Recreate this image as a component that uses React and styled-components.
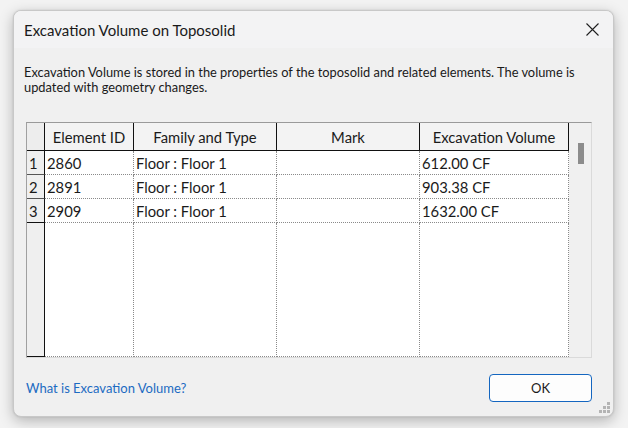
import React from 'react';
import styled, { createGlobalStyle } from 'styled-components';

const Global = createGlobalStyle`
  html, body {
    margin: 0;
    padding: 0;
    background: #f3f3f3;
  }
  body {
    width: 628px;
    height: 428px;
    overflow: hidden;
    font-family: "Segoe UI", Lato, "Noto Sans", sans-serif;
    color: #1a1a1a;
  }
`;

const Desktop = styled.div`
  width: 628px;
  height: 428px;
  box-sizing: border-box;
  padding: 10px 14px 0 13px;
`;

const Window = styled.div`
  position: relative;
  width: 601px;
  height: 407px;
  box-sizing: border-box;
  display: flex;
  flex-direction: column;
  background: #f0f0f0;
  border: 1px solid #c8c8c8;
  border-radius: 8px;
  overflow: hidden;
  box-shadow: 0 4px 14px rgba(0, 0, 0, 0.26), 0 0 2px rgba(0, 0, 0, 0.12);
`;

const TitleBar = styled.div`
  height: 37px;
  display: flex;
  align-items: center;
  padding-left: 10px;
  background: #f3f3f4;
`;

const Title = styled.div`
  font-size: 15px;
  color: #1a1a1a;
`;

const CloseButton = styled.div`
  margin-left: auto;
  width: 42px;
  height: 37px;
  display: flex;
  align-items: center;
  justify-content: center;
`;

const Content = styled.div`
  display: flex;
  flex-direction: column;
  padding: 0 22px 0 12px;
`;

const Description = styled.p`
  margin: 17px 0 0 -2px;
  font-size: 12.85px;
  line-height: 15px;
  color: #1a1a1a;
`;

const GridBox = styled.div`
  margin-top: 27px;
  width: 566px;
  box-sizing: border-box;
  display: flex;
  border-top: 1px solid #9a9a9a;
  border-left: 1px solid #a0a0a0;
  border-right: 1px solid #dadada;
  border-bottom: 1px solid #dadada;
  background: #ffffff;
`;

const Sheet = styled.div`
  display: grid;
  grid-template-columns: 18px 89px 143px 143px 149px;
  grid-template-rows: 28px 24px 24px 24px 134px;
  font-size: 14.8px;
`;

const Corner = styled.div`
  background: #ededed;
  border-right: 1px solid #111;
  border-bottom: 1px solid #111;
`;

const HeaderCell = styled.div`
  background: #f3f3f3;
  border-right: 1px solid #111;
  border-bottom: 1px solid #111;
  display: flex;
  align-items: center;
  justify-content: center;
  font-size: 14.8px;
  color: #1a1a1a;
  white-space: nowrap;
`;

const RowHeader = styled.div`
  background: #efefef;
  border-right: 1px solid #111;
  border-bottom: 1px solid ${p => (p.$last ? '#111' : '#555')};
  display: flex;
  align-items: center;
  padding-left: 2px;
  font-size: 14.8px;
`;

const Cell = styled.div`
  background: #ffffff;
  border-right: 1px dotted #8a8a8a;
  border-bottom: 1px dotted #8a8a8a;
  display: flex;
  align-items: center;
  padding-left: 2px;
  font-size: 14.8px;
  color: #1a1a1a;
  white-space: nowrap;
`;

const ScrollTrack = styled.div`
  width: 22px;
  background: #f0f0f0;
  display: flex;
  justify-content: center;
`;

const Thumb = styled.div`
  margin-top: 20px;
  margin-left: 2px;
  width: 6px;
  height: 21px;
  background: #8c8c8c;
`;

const Footer = styled.div`
  margin-top: 16px;
  display: flex;
  align-items: center;
  justify-content: space-between;
`;

const HelpLink = styled.a`
  font-size: 13px;
  color: #1c6bc2;
  text-decoration: none;
  cursor: pointer;
`;

const OkButton = styled.button`
  width: 103px;
  height: 28px;
  margin-right: -1px;
  box-sizing: border-box;
  border: 1px solid #1466c0;
  border-radius: 4px;
  background: #fdfdfd;
  font-family: inherit;
  font-size: 13px;
  color: #1a1a1a;
  padding: 0;
`;

const Grip = styled.svg`
  position: absolute;
  right: 2px;
  bottom: 2px;
`;

const rows = [
  { n: 1, id: '2860', type: 'Floor : Floor 1', mark: '', vol: '612.00 CF' },
  { n: 2, id: '2891', type: 'Floor : Floor 1', mark: '', vol: '903.38 CF' },
  { n: 3, id: '2909', type: 'Floor : Floor 1', mark: '', vol: '1632.00 CF' },
];

export default function App() {
  return (
    <>
      <Global />
      <Desktop>
        <Window>
          <TitleBar>
            <Title>Excavation Volume on Toposolid</Title>
            <CloseButton>
              <svg width="13" height="13" viewBox="0 0 13 13">
                <path d="M0.5 0.5 L12.5 12.5 M12.5 0.5 L0.5 12.5" stroke="#1f1f1f" strokeWidth="1.1" fill="none" />
              </svg>
            </CloseButton>
          </TitleBar>
          <Content>
            <Description>
              Excavation Volume is stored in the properties of the toposolid and related elements. The volume is
              updated with geometry changes.
            </Description>
            <GridBox>
              <Sheet>
                <Corner />
                <HeaderCell>Element ID</HeaderCell>
                <HeaderCell>Family and Type</HeaderCell>
                <HeaderCell>Mark</HeaderCell>
                <HeaderCell>Excavation Volume</HeaderCell>
                {rows.map(r => (
                  <React.Fragment key={r.n}>
                    <RowHeader $last={r.n === 3}>{r.n}</RowHeader>
                    <Cell>{r.id}</Cell>
                    <Cell>{r.type}</Cell>
                    <Cell>{r.mark}</Cell>
                    <Cell>{r.vol}</Cell>
                  </React.Fragment>
                ))}
                <RowHeader $last />
                <Cell />
                <Cell />
                <Cell />
                <Cell />
              </Sheet>
              <ScrollTrack>
                <Thumb />
              </ScrollTrack>
            </GridBox>
            <Footer>
              <HelpLink>What is Excavation Volume?</HelpLink>
              <OkButton>OK</OkButton>
            </Footer>
          </Content>
          <Grip width="12" height="12" viewBox="0 0 12 12">
            <rect x="8" y="0" width="3" height="3" fill="#b4b4b4" />
            <rect x="4" y="4" width="3" height="3" fill="#b4b4b4" />
            <rect x="8" y="4" width="3" height="3" fill="#b4b4b4" />
            <rect x="0" y="8" width="3" height="3" fill="#b4b4b4" />
            <rect x="4" y="8" width="3" height="3" fill="#b4b4b4" />
            <rect x="8" y="8" width="3" height="3" fill="#b4b4b4" />
          </Grip>
        </Window>
      </Desktop>
    </>
  );
}
